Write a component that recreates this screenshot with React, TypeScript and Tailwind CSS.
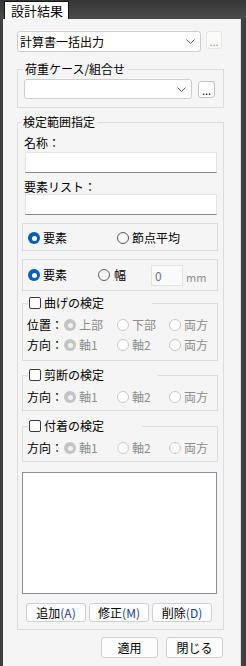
const Chevron = () => (
  <svg width="9" height="5" viewBox="0 0 9 5">
    <path d="M0.5 0.5L4.5 4.5L8.5 0.5" fill="none" stroke="#5a5a5a" strokeWidth="1" />
  </svg>
);

const Radio = ({ checked, disabled }: { checked?: boolean; disabled?: boolean }) => {
  if (checked && !disabled)
    return (
      <span className="w-[12px] h-[12px] rounded-full bg-[#005fb8] flex items-center justify-center shrink-0">
        <span className="w-[5px] h-[5px] rounded-full bg-white" />
      </span>
    );
  if (checked && disabled)
    return (
      <span className="w-[12px] h-[12px] rounded-full bg-[#c4c4c4] flex items-center justify-center shrink-0">
        <span className="w-[5px] h-[5px] rounded-full bg-[#f2f2f2]" />
      </span>
    );
  if (disabled)
    return <span className="w-[12px] h-[12px] rounded-full border border-[#c8c8c8] bg-white shrink-0" />;
  return <span className="w-[12px] h-[12px] rounded-full border border-[#5c5c5c] bg-[#f8f8f8] shrink-0" />;
};

const RadioItem = ({
  label,
  checked,
  disabled,
  w,
}: {
  label: string;
  checked?: boolean;
  disabled?: boolean;
  w: string;
}) => (
  <div className={`${w} flex items-center gap-[3px]`}>
    <Radio checked={checked} disabled={disabled} />
    <span className={disabled ? "text-[#8c8c8c]" : "text-black"}>{label}</span>
  </div>
);

const Checkbox = () => <span className="w-[12px] h-[12px] border border-[#3a3a3a] rounded-[2px] bg-white shrink-0" />;

const CheckRow = ({ label, items }: { label: string; items: string[] }) => (
  <div className="h-[18px] flex items-center">
    <span className="w-[37px]">{label}：</span>
    <RadioItem w="w-[53px]" label={items[0]} checked disabled />
    <RadioItem w="w-[52px]" label={items[1]} disabled />
    <RadioItem w="w-[48px]" label={items[2]} disabled />
  </div>
);

const Btn = ({ children, w }: { children: React.ReactNode; w: string }) => (
  <button className={`${w} h-[19px] bg-[#fdfdfd] border border-[#d0d0d0] rounded-[3px] text-[12px] leading-[17px] text-black flex items-center justify-center`}>
    {children}
  </button>
);

const Mn = ({ c }: { c: string }) => <span className="text-[#1d3f86]">({c})</span>;

export default function App() {
  return (
    <div className="w-[246px] h-[666px] bg-[#3f3f3f] flex flex-col font-['Noto_Sans_CJK_JP','Noto_Sans',sans-serif] text-[12px] leading-[14px] text-black">
      <div className="h-[19px] shrink-0 bg-gradient-to-b from-[#363636] to-[#4b4b4b] pl-[4px] pt-[1px]">
        <div className="w-[65px] h-[18px] bg-white border border-b-0 border-[#151515] text-[13px] leading-[17px] pl-[6px]">
          設計結果
        </div>
      </div>
      <div className="flex-1 pl-[3px] flex">
        <div className="w-[238px] bg-[#f5f5f5] border-r border-[#dedede] pt-[12px] pl-[14px]">
          <div className="flex items-start gap-[5px]">
            <div className="w-[184px] h-[21px] bg-white border border-[#cdcdcd] rounded-[3px] flex items-center justify-between pl-[2px] pr-[5px]">
              <span>計算書一括出力</span>
              <Chevron />
            </div>
            <div className="w-[16px] h-[18px] bg-[#fbfbfb] border border-[#e6e6e6] rounded-[3px] text-[#9a82c0] text-[11px] leading-[14px] flex items-end justify-center">
              ...
            </div>
          </div>

          <fieldset className="mt-[10px] w-[207px] border border-[#dcdcdc] pl-[6px] pb-[8px]">
            <legend className="ml-[-1px] px-[2px] leading-[14px]">荷重ケース/組合せ</legend>
            <div className="mt-[3px] flex items-start gap-[6px]">
              <div className="w-[168px] h-[20px] bg-white border border-[#cdcdcd] rounded-[3px] flex items-center justify-end pr-[5px]">
                <Chevron />
              </div>
              <div className="mt-[2px] w-[17px] h-[17px] bg-[#fdfdfd] border border-[#c4c4c4] rounded-[3px] text-[11px] leading-[14px] flex items-end justify-center">
                ...
              </div>
            </div>
          </fieldset>

          <fieldset className="mt-[7px] w-[207px] border border-[#dcdcdc] pl-[3px] pb-[7px]">
            <legend className="px-[2px] leading-[14px]">検定範囲指定</legend>
            <div className="mt-[7px] pl-[3px] h-[14px]">名称：</div>
            <div className="mt-[2px] ml-[4px] w-[192px] h-[21px] bg-white border border-[#e6e6e6] border-b-[#868686]" />
            <div className="mt-[7px] pl-[3px] h-[14px]">要素リスト：</div>
            <div className="ml-[4px] w-[192px] h-[21px] bg-white border border-[#e6e6e6] border-b-[#868686]" />

            <div className="mt-[8px] ml-[1px] w-[196px] h-[28px] border border-[#dcdcdc] flex items-center pl-[5px] pt-[2px]">
              <RadioItem w="w-[89px]" label="要素" checked />
              <RadioItem w="w-[90px]" label="節点平均" />
            </div>

            <div className="mt-[8px] ml-[1px] w-[196px] h-[32px] border border-[#dcdcdc] flex items-center pl-[5px]">
              <RadioItem w="w-[70px]" label="要素" checked />
              <div className="w-[53px] flex items-center gap-[4px]">
                <Radio />
                <span>幅</span>
              </div>
              <div className="w-[32px] h-[21px] bg-[#fafafa] border border-[#e3e3e3] text-[#6f6f8f] pl-[3px] leading-[19px]">0</div>
              <span className="ml-[3px] mt-[4px] text-[#8c8c8c] text-[11px]">mm</span>
            </div>

            <fieldset className="mt-[5px] ml-[1px] w-[196px] border border-[#dcdcdc] pl-[4px] pb-[6px]">
              <legend className="ml-[1px] w-[124px] pl-[1px] h-[14px] flex items-center gap-[3px]">
                <Checkbox />
                <span>曲げの検定</span>
              </legend>
              <div className="mt-[6px] flex flex-col gap-[2px]">
                <CheckRow label="位置" items={["上部", "下部", "両方"]} />
                <CheckRow label="方向" items={["軸1", "軸2", "両方"]} />
              </div>
            </fieldset>

            <fieldset className="mt-[7px] ml-[1px] w-[196px] border border-[#dcdcdc] pl-[4px] pb-[4px]">
              <legend className="ml-[1px] w-[130px] pl-[1px] h-[14px] flex items-center gap-[3px]">
                <Checkbox />
                <span>剪断の検定</span>
              </legend>
              <div className="mt-[6px]">
                <CheckRow label="方向" items={["軸1", "軸2", "両方"]} />
              </div>
            </fieldset>

            <fieldset className="mt-[8px] ml-[1px] w-[196px] border border-[#dcdcdc] pl-[4px] pb-[4px]">
              <legend className="ml-[1px] w-[114px] pl-[1px] h-[14px] flex items-center gap-[3px]">
                <Checkbox />
                <span>付着の検定</span>
              </legend>
              <div className="mt-[6px]">
                <CheckRow label="方向" items={["軸1", "軸2", "両方"]} />
              </div>
            </fieldset>

            <div className="mt-[10px] ml-[1px] w-[195px] h-[122px] bg-white border border-[#8c8c9c]" />

            <div className="mt-[9px] ml-[5px] flex gap-[3px]">
              <Btn w="w-[60px]">追加<Mn c="A" /></Btn>
              <Btn w="w-[60px]">修正<Mn c="M" /></Btn>
              <Btn w="w-[60px]">削除<Mn c="D" /></Btn>
            </div>
          </fieldset>

          <div className="mt-[7px] ml-[84px] flex gap-[8px]">
            <button className="w-[57px] h-[21px] bg-[#fdfdfd] border border-[#d0d0d0] rounded-[3px] text-[12px] leading-[19px]">適用</button>
            <button className="w-[57px] h-[21px] bg-[#fdfdfd] border border-[#d0d0d0] rounded-[3px] text-[12px] leading-[19px]">閉じる</button>
          </div>
        </div>
      </div>
    </div>
  );
}
